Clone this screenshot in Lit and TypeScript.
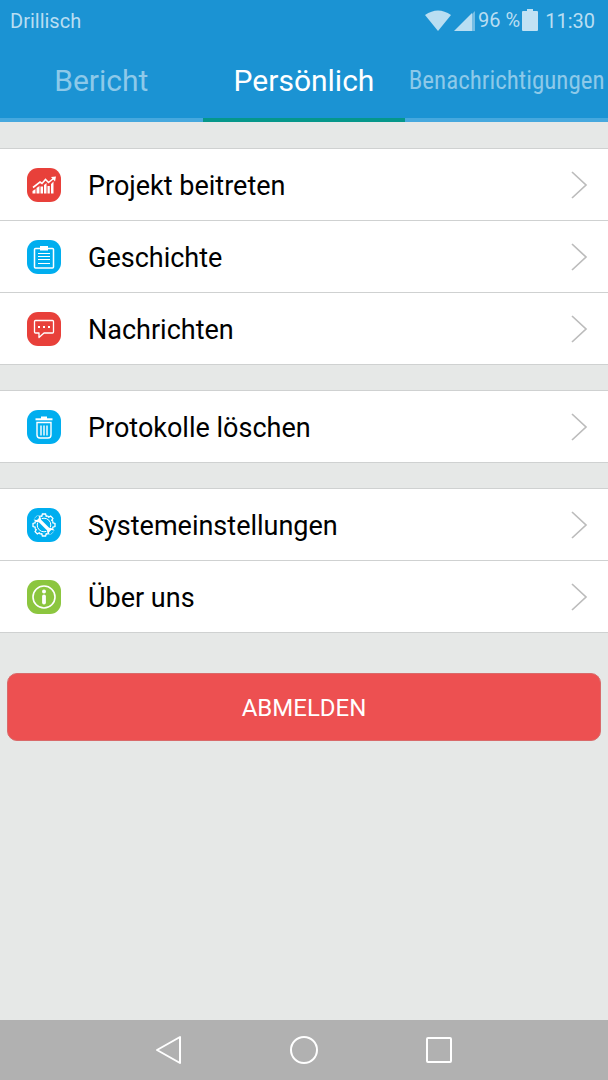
import { LitElement, html, css, svg } from "lit";
import { customElement, property } from "lit/decorators.js";

const gearTeeth = Array.from({ length: 8 }, (_, i) => i * 45);

const icons: Record<string, unknown> = {
  chart: svg`
    <path d="M6 19.500L13 14L15 15.500L18.500 11.500L21.500 14.500L26.500 10.500" fill="none" stroke="#fff" stroke-width="1.600"/>
    <path d="M24 9L29 8.500L28 13.500Z" fill="#fff"/>
    <path d="M5.500 25.500V23L8.500 21V25.500ZM9.500 25.500V20L12.500 18V25.500ZM13.500 25.500V18.500L16 18.500V25.500ZM17 25.500V17L19.500 15V25.500ZM20.500 25.500V18H22.800V25.500ZM24 25.500V16L26.500 13.500V25.500Z" fill="#fff"/>`,
  clipboard: svg`
    <rect x="7.500" y="8.500" width="19" height="19.500" rx="1" fill="none" stroke="#fff" stroke-width="1.500"/>
    <path d="M13 6H21V10.500H13Z" fill="#fff"/>
    <path d="M11 13.500H23M11 16.500H23M11 19.500H23M11 23.500H23" stroke="#fff" stroke-width="1"/>`,
  message: svg`
    <path d="M8.500 8.500H25.500Q26.500 8.500 26.500 9.500V20Q26.500 21 25.500 21H17L12 25.500V21H8.500Q7.500 21 7.500 20V9.500Q7.500 8.500 8.500 8.500Z" fill="none" stroke="#fff" stroke-width="1.300" stroke-linejoin="round"/>
    <path d="M11 15H13M16 15H18M21 15H23" stroke="#fff" stroke-width="1.800"/>`,
  trash: svg`
    <path d="M8.500 9.300H25.500" stroke="#fff" stroke-width="2"/>
    <path d="M14 6.500H20V9H14Z" fill="#fff"/>
    <path d="M10 12.500H24V25Q24 28 21 28H13Q10 28 10 25Z" fill="none" stroke="#fff" stroke-width="1.400"/>
    <path d="M14 15.500V25.500M17 15.500V25.500M20 15.500V25.500" stroke="#fff" stroke-width="1.400"/>`,
  tools: svg`
    ${gearTeeth.map(
      (a) => svg`<path d="M13.300 8L14.800 8.200L15.400 6H18.600L19.200 8.200L20.700 8" fill="none" stroke="#fff" stroke-width="1.300" transform="rotate(${a} 17 17)"/>`
    )}
    <circle cx="17" cy="17" r="6.800" fill="none" stroke="#fff" stroke-width="1"/>
    <path d="M9 9L25 25" stroke="#00aeef" stroke-width="6"/>
    <path d="M11.500 11.500L23 23" stroke="#fff" stroke-width="3.200"/>
    <path d="M11.500 7Q14.500 9 13.800 12.500L12.500 14Q9 15 6.500 11.500L10 12L12 10ZM22.500 27Q19.500 25 20.200 21.500L21.500 20Q25 19 27.800 22.500L24 22L22 24Z" fill="#fff"/>`,
  info: svg`
    <circle cx="17" cy="17" r="11" fill="none" stroke="#fff" stroke-width="1.600"/>
    <circle cx="17" cy="11.500" r="2" fill="#fff"/>
    <path d="M17 16.300V22.500" stroke="#fff" stroke-width="3.800" stroke-linecap="round"/>`,
};

interface Entry {
  label: string;
  icon: string;
  color: string;
}

const groups: Entry[][] = [
  [
    { label: "Projekt beitreten", icon: "chart", color: "#e8403a" },
    { label: "Geschichte", icon: "clipboard", color: "#00aeef" },
    { label: "Nachrichten", icon: "message", color: "#e8403a" },
  ],
  [{ label: "Protokolle löschen", icon: "trash", color: "#00aeef" }],
  [
    { label: "Systemeinstellungen", icon: "tools", color: "#00aeef" },
    { label: "Über uns", icon: "info", color: "#8cc63f" },
  ],
];

@customElement("menu-row")
export class MenuRow extends LitElement {
  @property() label = "";
  @property() icon = "";
  @property() color = "";

  static styles = css`
    :host { display: block; }
    .row {
      display: flex;
      align-items: center;
      width: 100%;
      height: 71px;
      box-sizing: border-box;
      padding: 0 20px 0 27px;
      border: 0;
      background: #fff;
      color: #000;
      font: 27px/32px Roboto, sans-serif;
      text-align: left;
    }
    .icon { width: 34px; height: 34px; flex: none; margin-right: 27px; }
    .label { flex: 1; padding-top: 2px; }
    .chevron { width: 18px; height: 28px; flex: none; }
  `;

  render() {
    return html`<button class="row" type="button">
      <svg class="icon" viewBox="0 0 34 34" aria-hidden="true">
        <rect width="34" height="34" rx="11" fill=${this.color} />
        ${icons[this.icon]}
      </svg>
      <span class="label">${this.label}</span>
      <svg class="chevron" viewBox="0 0 18 28" aria-hidden="true">
        <path d="M2 1L16 14L2 27" fill="none" stroke="#bcbcbc" stroke-width="1.700" />
      </svg>
    </button>`;
  }
}

@customElement("app-root")
export class AppRoot extends LitElement {
  static styles = css`
    :host {
      display: flex;
      flex-direction: column;
      min-height: 100vh;
      background: #e6e8e7;
      font-family: Roboto, sans-serif;
    }
    .header { background: #1b93d3; }
    .status {
      display: flex;
      align-items: center;
      justify-content: space-between;
      height: 42px;
      padding: 0 13px 0 10px;
      font-size: 20px;
      line-height: 24px;
      color: #b9def2;
    }
    .indicators { display: flex; align-items: center; }
    .wifi { width: 26px; height: 22px; margin-right: 3px; }
    .signal { width: 22px; height: 22px; margin-right: 2px; }
    .percent { padding-bottom: 2px; }
    .battery { width: 16px; height: 24px; margin: 0 7px 0 2px; }
    .tabs { display: grid; grid-template-columns: repeat(3, minmax(0, 1fr)); }
    .tab {
      height: 80px;
      padding: 2px 0 0;
      border: 0;
      border-bottom: 4px solid #46a8de;
      background: none;
      color: #8dc9e9;
      font: 30px/36px Roboto, sans-serif;
      white-space: nowrap;
    }
    .tab.active { color: #fff; border-bottom-color: #05978b; }
    .tab.long { font: 25px/36px "Roboto Condensed", Roboto, sans-serif; }
    .content {
      display: flex;
      flex: 1;
      flex-direction: column;
      gap: 25px;
      padding-top: 26px;
    }
    .group {
      margin: 0;
      padding: 0;
      list-style: none;
      border-bottom: 1px solid #cfd1d1;
    }
    .item { border-top: 1px solid #cfd1d1; }
    .logout {
      height: 68px;
      margin: 15px 7px 0;
      padding: 2px 0 0;
      border: 1px solid #d96a6a;
      border-radius: 10px;
      background: #ed5051;
      color: #fff;
      font: 24px/28px Roboto, sans-serif;
    }
    .nav {
      display: flex;
      justify-content: center;
      gap: 95px;
      height: 60px;
      background: #b1b1b1;
    }
    .key {
      display: grid;
      place-items: center;
      width: 40px;
      padding: 0;
      border: 0;
      background: none;
    }
    .glyph { width: 30px; height: 30px; fill: none; stroke: #fff; stroke-width: 2; stroke-linejoin: round; }
  `;

  render() {
    return html`
      <header class="header">
        <div class="status">
          <span>Drillisch</span>
          <div class="indicators">
            <svg class="wifi" viewBox="0 0 26 22" aria-hidden="true">
              <path d="M0 5Q13 -4 26 5L13 21Z" fill="#b9def2" />
            </svg>
            <svg class="signal" viewBox="0 0 22 22" aria-hidden="true">
              <path d="M18 4L21 1V21H18Z" fill="#75bde4" />
              <path d="M0 21L18 3V21Z" fill="#b9def2" />
            </svg>
            <span class="percent">96 %</span>
            <svg class="battery" viewBox="0 0 16 24" aria-hidden="true">
              <path d="M5 0H11V2H15Q16 2 16 3V21Q16 22 15 22H1Q0 22 0 21V3Q0 2 1 2H5Z" fill="#c0e2f4" />
            </svg>
            <span>11:30</span>
          </div>
        </div>
        <div class="tabs" role="tablist">
          <button class="tab" role="tab" aria-selected="false">Bericht</button>
          <button class="tab active" role="tab" aria-selected="true">Persönlich</button>
          <button class="tab long" role="tab" aria-selected="false">Benachrichtigungen</button>
        </div>
      </header>
      <main class="content">
        ${groups.map(
          (group) => html`<ul class="group">
            ${group.map(
              (e) => html`<li class="item">
                <menu-row .label=${e.label} .icon=${e.icon} .color=${e.color}></menu-row>
              </li>`
            )}
          </ul>`
        )}
        <button class="logout" type="button">ABMELDEN</button>
      </main>
      <nav class="nav">
        <button class="key" type="button" aria-label="Zurück">
          <svg class="glyph" viewBox="0 0 30 30"><path d="M3 15L26 2V28Z" /></svg>
        </button>
        <button class="key" type="button" aria-label="Startseite">
          <svg class="glyph" viewBox="0 0 30 30"><circle cx="15" cy="15" r="13" /></svg>
        </button>
        <button class="key" type="button" aria-label="Übersicht">
          <svg class="glyph" viewBox="0 0 30 30"><rect x="3" y="3" width="24" height="24" rx="1" /></svg>
        </button>
      </nav>
    `;
  }
}
